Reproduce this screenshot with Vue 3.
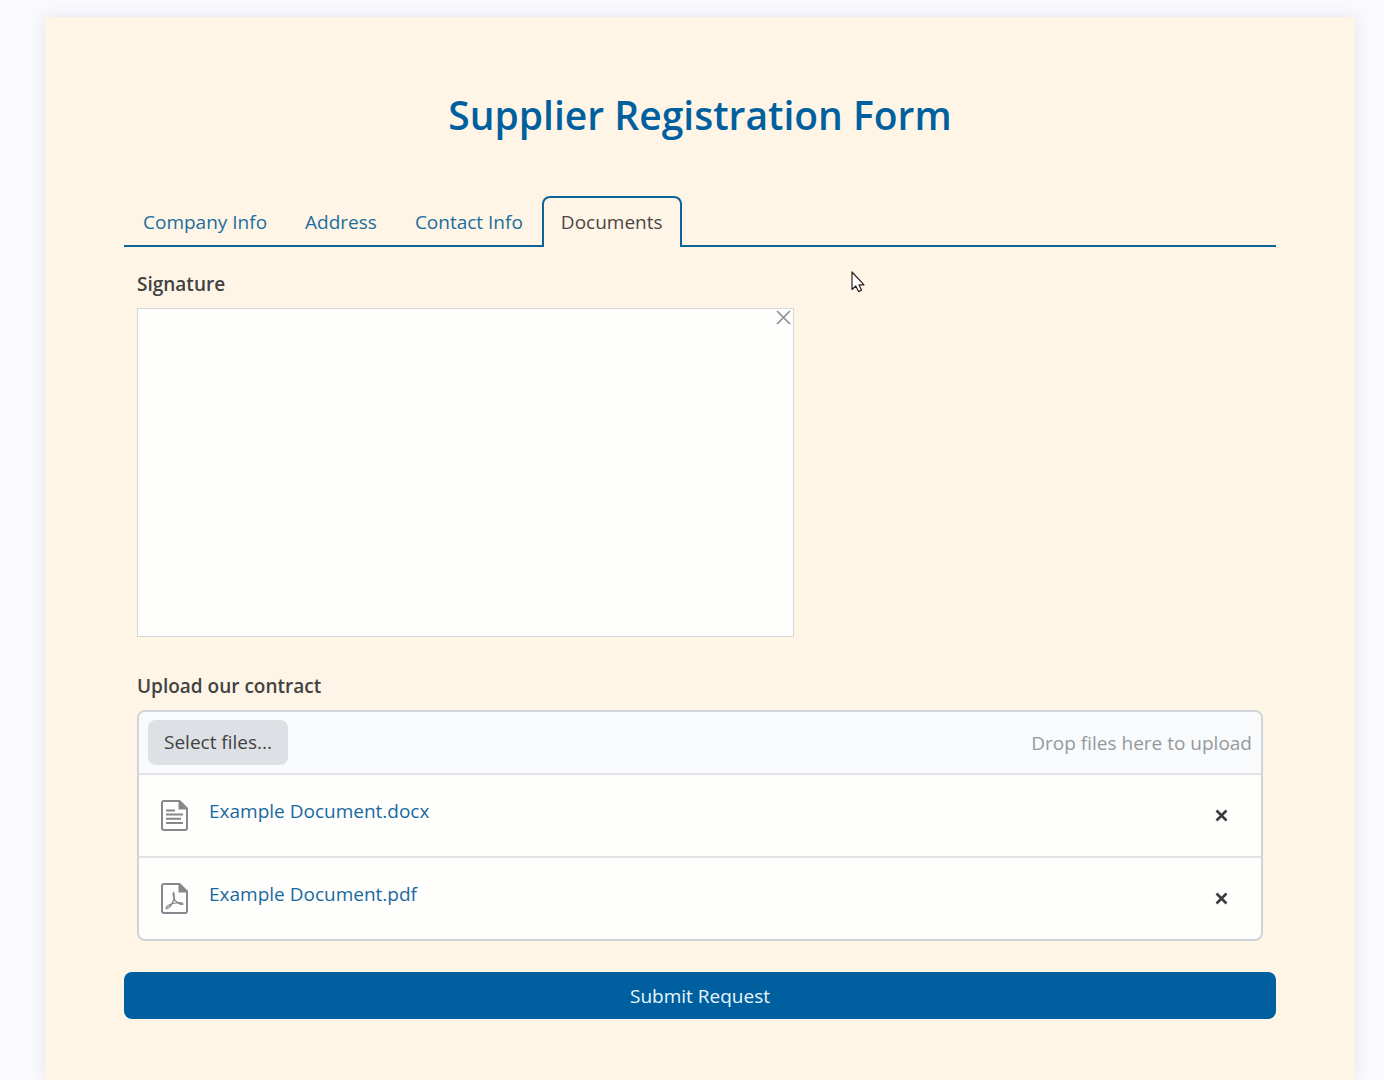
<script setup>
import { ref } from 'vue'

const tabs = ['Company Info', 'Address', 'Contact Info', 'Documents']
const activeTab = ref('Documents')
const picker = ref(null)
const files = ref([
  { name: 'Example Document.docx', kind: 'text' },
  { name: 'Example Document.pdf', kind: 'pdf' }
])

function removeFile(index) {
  files.value.splice(index, 1)
}

function addFiles(event) {
  for (const file of event.target.files) {
    files.value.push({ name: file.name, kind: file.name.endsWith('.pdf') ? 'pdf' : 'text' })
  }
}
</script>

<template>
  <main class="page">
    <form class="card" @submit.prevent>
      <h1 class="title">Supplier Registration Form</h1>

      <div class="tabs" role="tablist">
        <button
          v-for="tab in tabs"
          :key="tab"
          type="button"
          role="tab"
          class="tab"
          :class="{ active: tab === activeTab }"
          :aria-selected="tab === activeTab"
          @click="activeTab = tab"
        >{{ tab }}</button>
      </div>

      <section class="panel" role="tabpanel">
        <div class="label" id="signature-label">Signature</div>
        <div class="signature" role="group" aria-labelledby="signature-label">
          <canvas class="pad"></canvas>
          <button type="button" class="clear" aria-label="Clear signature">
            <svg width="15" height="15" viewBox="0 0 15 15" aria-hidden="true">
              <path d="M1 1 L14 14 M14 1 L1 14" fill="none" stroke="#8b8e92" stroke-width="1.7" />
            </svg>
          </button>
        </div>

        <label class="label" for="contract">Upload our contract</label>
        <div class="upload">
          <div class="dropzone">
            <button type="button" class="select" @click="picker.click()">Select files...</button>
            <input id="contract" ref="picker" type="file" multiple hidden @change="addFiles" />
            <span class="hint">Drop files here to upload</span>
          </div>
          <ul class="files">
            <li v-for="(file, index) in files" :key="file.name" class="file">
              <svg class="file-icon" width="27" height="31" viewBox="0 0 27 31" aria-hidden="true">
                <path d="M18 1 H3 Q1 1 1 3 V28 Q1 30 3 30 H24 Q26 30 26 28 V9" fill="none" stroke="#85888c" stroke-width="2" />
                <path d="M17.500 0 H19 L27 8 V9.500 H17.500 Z" fill="#85888c" />
                <path v-if="file.kind === 'text'" d="M5 10.500 H14 M5 14.500 H22 M5 18.700 H20 M5 23 H22" fill="none" stroke="#85888c" stroke-width="2" />
                <path v-else d="M12.500 9.500 C11.500 11 13 14 13 16 C11.500 21 8 26 5.300 25.500 C4.500 23.800 9 21 13 20.200 C17 19.300 21.500 19.500 22 21 C20 22.500 15.500 19.500 13.500 16.500 C12.800 14 14 10.500 12.500 9.500 Z" fill="none" stroke="#85888c" stroke-width="1.300" stroke-linejoin="round" />
              </svg>
              <a class="file-name" href="#">{{ file.name }}</a>
              <button type="button" class="remove" :aria-label="`Remove ${file.name}`" @click="removeFile(index)">
                <svg width="13" height="13" viewBox="0 0 13 13" aria-hidden="true">
                  <path d="M1.500 1.500 L11.500 11.500 M11.500 1.500 L1.500 11.500" fill="none" stroke="#3a3c3f" stroke-width="2.600" />
                </svg>
              </button>
            </li>
          </ul>
        </div>
      </section>

      <button type="submit" class="submit">Submit Request</button>

      <svg class="pointer" width="14" height="22" viewBox="0 0 14 22" aria-hidden="true">
        <path d="M1 1 V18.500 L4.800 15 L7.500 20.600 L10.500 19.200 L8 13.800 H13 Z" fill="#fff" stroke="#2b2320" stroke-width="1.200" stroke-linejoin="round" />
      </svg>
    </form>
  </main>
</template>

<style>
body {
  background: #fafafd;
}
</style>

<style scoped>
.page {
  box-sizing: border-box;
  min-height: 100vh;
  padding: 17px 29px 0 45px;
  font-family: "Open Sans", "Noto Sans", sans-serif;
  font-size: 19px;
  line-height: 28px;
  color: #424242;
}

.card {
  position: relative;
  box-sizing: border-box;
  min-height: calc(100vh - 17px);
  padding: 73px 79px 60px;
  background: #fef5e6;
  box-shadow: 0 0 14px rgba(90, 90, 180, 0.14);
}

.title {
  margin: 0 0 57px;
  font-size: 39px;
  font-weight: 600;
  line-height: 49px;
  text-align: center;
  color: #00609f;
}

button {
  font: inherit;
  cursor: pointer;
}

.tabs {
  display: flex;
  border-bottom: 2px solid #0d6498;
}

.tab {
  margin: 0 0 -2px;
  padding: 10px 17px 11px;
  border: 2px solid transparent;
  border-bottom: 0;
  border-radius: 8px 8px 0 0;
  background: transparent;
  color: #216d9c;
}

.tab.active {
  border-color: #0d6498;
  background: #fef5e6;
  color: #4a4745;
}

.panel {
  padding: 23px 13px 31px;
}

.label {
  display: block;
  margin-bottom: 10px;
  font-weight: 600;
}

.signature {
  position: relative;
  box-sizing: border-box;
  max-width: 657px;
  height: 329px;
  margin-bottom: 35px;
  border: 1px solid #d5d7da;
  background: #fefefd;
}

.pad {
  display: block;
  width: 100%;
  height: 100%;
}

.clear {
  position: absolute;
  top: 1px;
  right: 2px;
  display: flex;
  padding: 0;
  border: 0;
  background: none;
}

.upload {
  overflow: hidden;
  border: 2px solid #d0d3d8;
  border-radius: 8px;
  background: #fefefd;
}

.dropzone {
  display: flex;
  align-items: center;
  justify-content: space-between;
  padding: 8px 9px;
  background: #f8fafb;
}

.select {
  padding: 8px 16px 9px;
  border: 0;
  border-radius: 8px;
  background: #dde0e4;
  color: #424242;
}

.hint {
  color: #94999d;
}

.files {
  margin: 0;
  padding: 0;
  list-style: none;
}

.file {
  display: flex;
  align-items: center;
  box-sizing: border-box;
  height: 83px;
  padding: 0 33px 0 22px;
  border-top: 2px solid #e1e3e6;
}

.file-icon {
  flex: none;
}

.file-name {
  flex: 1;
  margin-left: 21px;
  padding-bottom: 9px;
  color: #1a699e;
  text-decoration: none;
}

.remove {
  display: flex;
  padding: 0;
  border: 0;
  background: none;
}

.submit {
  display: block;
  width: 100%;
  padding: 10px 16px 9px;
  border: 0;
  border-radius: 8px;
  background: #00609f;
  color: #e8f6fc;
}

/* Pointer floats over the form */
.pointer {
  position: absolute;
  left: 806px;
  top: 254px;
}
</style>
